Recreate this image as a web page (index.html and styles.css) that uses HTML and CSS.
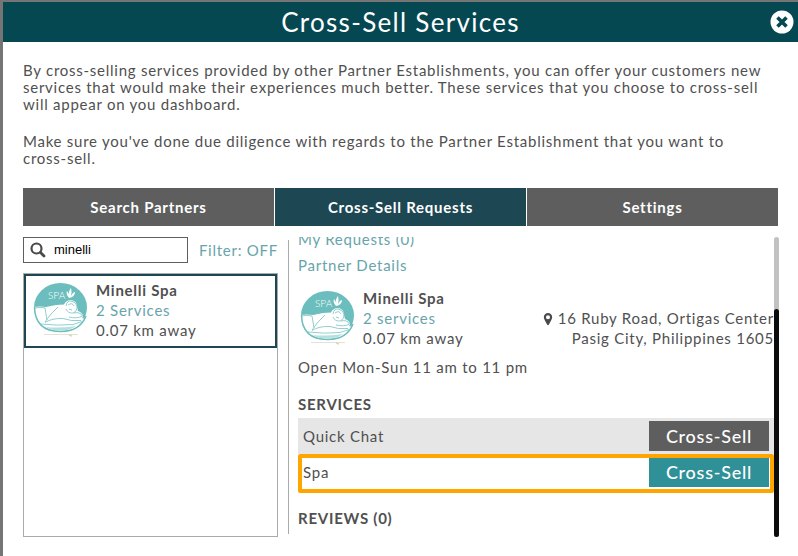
FILE: index.html
```
<!DOCTYPE html>
<html lang="en">

<head>
    <meta charset="utf-8" />
    <title>Cross-Sell Services</title>
    <link rel="stylesheet" href="styles.css">
</head>

<body>

<!-- spa logo, used in the list and in the details -->
<svg class="defs" aria-hidden="true">
    <symbol id="spa-logo" viewBox="0 0 60 60">
        <ellipse cx="29.500" cy="27.500" rx="26.500" ry="24.500" fill="#6cbdbd"/>
        <path d="M3 27 Q9 26 15 27 L25 25 L33 24.500 Q35 20 40 20 Q46 20.500 46 27 L47 31 Q52 33 52 36.500 Q50 39 54 38.500 Q49 51 29.500 51 Q9 50.500 4 37 Z" fill="#fff"/>
        <path d="M4 28 Q9 26.500 14 28 L16 40 M27 27 L20 34 L14 42 M35 26 Q36 20.500 40 21 Q45 21.500 46 26 Q46 32 42 33 Q37 33.500 35 29 M37 25 Q41 22 43 26 M38 29 L41 30 M43 33 Q49 31.500 51.500 36 Q46 39 38 37 M14 42.500 Q21 38 32 38.500 Q40 41.500 50 40.500 M10 44 Q27 46 42 44.500 L51 41.500" fill="none" stroke="#86cac8" stroke-width=".9"/>
        <path d="M3.500 27 Q4 51.500 29.500 51.500 Q49 51.500 55 36" fill="none" stroke="#6cbdbd" stroke-width="1.500"/>
        <path d="M15 47 Q28 48.500 45 46 Q39 50.500 29 50.500 Q20 50.500 15 47" fill="#b5e0de"/>
        <text x="17" y="19" class="logo-text">SPA</text>
        <path d="M38 18 Q34.500 14 36 11 Q38 13 38.500 16 Q37 11 40 8 Q41 11 40 16 Q42 12 44 12 Q44 17 38 18" fill="#fff"/>
        <path d="M13 54.500 H47" stroke="#e2e2da" stroke-width="1"/>
        <path d="M38 55 L41 56" stroke="#d9df9a" stroke-width="1.500"/>
    </symbol>
</svg>

<div class="modal">
    <header class="modal-header">
        <h1>Cross-Sell Services</h1>
        <button type="button" class="close" aria-label="Close">
            <svg width="24" height="24" viewBox="0 0 24 24">
                <circle cx="12" cy="12" r="11.500" fill="#fff"/>
                <path d="M7.500 7.500 L16.500 16.500 M16.500 7.500 L7.500 16.500" stroke="#054852" stroke-width="3.600"/>
            </svg>
        </button>
    </header>

    <div class="modal-body">
        <p>By cross-selling services provided by other Partner Establishments, you can offer your customers new services that would make their experiences much better. These services that you choose to cross-sell will appear on you dashboard.</p>
        <p>Make sure you've done due diligence with regards to the Partner Establishment that you want to <span class="nowrap">cross-sell.</span></p>

        <nav class="tabs">
            <button type="button">Search Partners</button>
            <button type="button" class="active">Cross-Sell Requests</button>
            <button type="button">Settings</button>
        </nav>

        <div class="columns">
            <div class="partners">
                <div class="toolbar">
                    <label class="search">
                        <svg width="16" height="16" viewBox="0 0 16 16" aria-hidden="true">
                            <circle cx="6.500" cy="6.500" r="5" fill="none" stroke="#4a4a4a" stroke-width="2.200"/>
                            <path d="M10.500 10.500 L14 14" stroke="#4a4a4a" stroke-width="2.800" stroke-linecap="round"/>
                        </svg>
                        <input type="text" value="minelli" aria-label="Search partners">
                    </label>
                    <a href="#filter">Filter: OFF</a>
                </div>
                <div class="list">
                    <div class="partner selected">
                        <svg class="logo" role="img" aria-label="Spa logo"><use href="#spa-logo"/></svg>
                        <div class="info">
                            <strong>Minelli Spa</strong>
                            <a href="#services">2 Services</a>
                            <span>0.07 km away</span>
                        </div>
                    </div>
                </div>
            </div>

            <div class="details">
                <div class="scroll">
                    <a class="link" href="#requests">My Requests (0)</a>
                    <a class="link" href="#details">Partner Details</a>

                    <div class="partner">
                        <svg class="logo" role="img" aria-label="Spa logo"><use href="#spa-logo"/></svg>
                        <div class="info">
                            <strong>Minelli Spa</strong>
                            <a href="#services">2 services</a>
                            <span>0.07 km away</span>
                        </div>
                        <address>
                            <svg width="10" height="13" viewBox="0 0 10 14" aria-hidden="true">
                                <path fill-rule="evenodd" d="M5 0 A4.500 4.500 0 0 1 9.500 4.500 C9.500 6.500 7.500 9 6 12.500 Q5 14 4 12.500 C2.500 9 .5 6.500 .5 4.500 A4.500 4.500 0 0 1 5 0 Z M5 2.300 A2.200 2.200 0 1 0 5 6.700 A2.200 2.200 0 1 0 5 2.300 Z" fill="#4a4a4a"/>
                            </svg>
                            16 Ruby Road, Ortigas Center<br>
                            Pasig City, Philippines 1605
                        </address>
                    </div>

                    <div class="hours">Open Mon-Sun 11 am to 11 pm</div>

                    <h2>SERVICES</h2>
                    <div class="services">
                        <div class="service">
                            <span>Quick Chat</span>
                            <button type="button">Cross-Sell</button>
                        </div>
                        <div class="service highlight">
                            <span>Spa</span>
                            <button type="button">Cross-Sell</button>
                        </div>
                    </div>

                    <h2>REVIEWS (0)</h2>
                </div>
                <div class="scrollbar"><div class="thumb"></div></div>
            </div>
        </div>
    </div>
</div>

</body>
</html>
```
FILE: styles.css
```
* {
    box-sizing: border-box;
}

body {
    margin: 0;
    font-family: Lato, "Liberation Sans", sans-serif;
    font-size: 15px;
    line-height: 20px;
    letter-spacing: 0.05em;
    font-variant-ligatures: common-ligatures;
    color: #505050;
    background: #fff;
}

button, input {
    font: inherit;
    letter-spacing: inherit;
    border: 0;
    padding: 0;
}

a {
    color: #67a5ab;
    text-decoration: none;
}

.defs {
    display: none;
}

.logo-text {
    font-family: Lato, sans-serif;
    font-size: 10px;
    font-weight: 300;
    letter-spacing: 0;
    fill: #fff;
}

.modal {
    min-height: 100vh;
    border-top: 2px solid #757575;
    border-left: 3px solid #757575;
}

.modal-header {
    position: relative;
    height: 40px;
    background: #054852;
}

.modal-header h1 {
    margin: 0;
    font-size: 26px;
    font-weight: normal;
    letter-spacing: 0.05em;
    line-height: 40px;
    text-align: center;
    color: #fff;
}

.close {
    position: absolute;
    top: 8px;
    right: 4px;
    height: 24px;
    background: none;
}

.modal-body {
    padding: 20px;
}

p {
    margin: 0 0 20px;
    line-height: 17px;
}

.nowrap {
    white-space: nowrap;
}

.tabs {
    display: grid;
    grid-template-columns: 1fr 1fr 1fr;
    gap: 1px;
    margin: 21px 0 11px;
}

.tabs button {
    height: 38px;
    font-weight: bold;
    color: #fff;
    background: #5e5e5e;
}

.tabs .active {
    background: #1d4753;
}

.columns {
    display: grid;
    grid-template-columns: 255px 1fr;
    gap: 10px;
    height: 300px;
    margin-right: -1px;
}

/* left column */

.partners {
    display: flex;
    flex-direction: column;
    gap: 10px;
}

.toolbar {
    display: flex;
    justify-content: space-between;
    align-items: center;
    white-space: nowrap;
}

.search {
    display: flex;
    align-items: center;
    gap: 8px;
    width: 165px;
    height: 26px;
    padding: 0 6px;
    border: 1px solid #5e5e5e;
}

.search svg {
    flex: none;
}

.search input {
    width: 100%;
    font: 13px/20px "Liberation Sans", sans-serif;
    letter-spacing: 0;
    color: #000;
    outline: 0;
}

.list {
    flex: 1;
    border: 1px solid #aaa;
}

.partner {
    display: flex;
    gap: 5px;
}

.partner.selected {
    padding: 4px 5px 6px;
    border: 2px solid #1d4753;
}

.logo {
    flex: none;
    width: 60px;
    height: 60px;
}

.info {
    display: flex;
    flex-direction: column;
    white-space: nowrap;
}

/* right column */

.details {
    display: flex;
    min-width: 0;
}

.details::before {
    content: "";
    width: 1px;
    margin: 3px 9px 3px 0;
    background: #aaa;
}

.scroll {
    flex: 1;
    overflow: hidden;
}

.link {
    display: block;
    margin-bottom: 6px;
}

/* list is scrolled down a little */
.link:first-child {
    margin-top: -8px;
}

.scroll .partner {
    margin-top: 13px;
}

address {
    margin: 20px 0 0 auto;
    font-style: normal;
    text-align: right;
    white-space: nowrap;
}

address svg {
    vertical-align: -2px;
}

.hours {
    margin: 9px 0 17px;
}

h2 {
    margin: 0;
    font-size: 15px;
    line-height: 20px;
}

.services {
    margin: 4px 0 18px;
}

.service {
    display: flex;
    position: relative;
    justify-content: space-between;
    align-items: center;
    height: 36px;
    padding: 0 5px;
    background: #e6e6e6;
}

.service button {
    width: 120px;
    height: 30px;
    font-size: 18px;
    font-weight: 500;
    color: #fff;
    background: #5e5e5e;
}

.service.highlight {
    background: #fff;
}

.service.highlight button {
    background: #2f9097;
}

/* frame lies over the row */
.service.highlight::after {
    content: "";
    position: absolute;
    inset: 0 0 -3px;
    border: 4px solid #ffa500;
    border-radius: 2px;
    pointer-events: none;
}

.scrollbar {
    width: 5px;
    padding-top: 72px;
    border-radius: 3px;
    background: #c1c1c1;
}

.thumb {
    height: 100%;
    border-radius: 3px;
    background: #0c0c0c;
}
```
